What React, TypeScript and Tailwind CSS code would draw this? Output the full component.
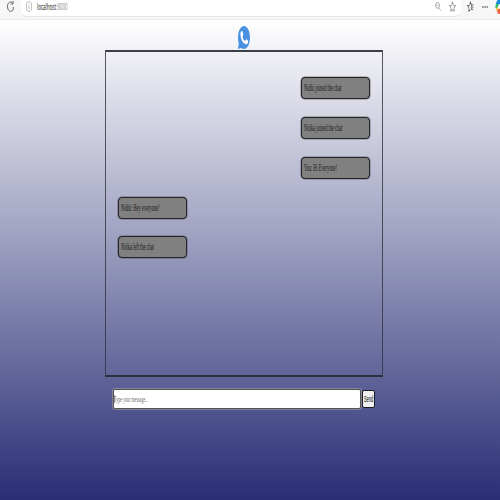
import type { ReactNode } from "react";

const messages = [
  { text: "Nidhi joined the chat", side: "right", scale: "scale-x-[0.445]" },
  { text: "Nitika joined the chat", side: "right", scale: "scale-x-[0.445]" },
  { text: "You: Hi Everyone!", side: "right", scale: "scale-x-[0.435]" },
  { text: "Nidhi: Hey everyone!", side: "left", scale: "scale-x-[0.440]" },
  { text: "Nitika left the chat", side: "left", scale: "scale-x-[0.440]" },
];

function Narrow({ className, children }: { className: string; children: ReactNode }) {
  return <span className={`block w-0 origin-left whitespace-nowrap ${className}`}>{children}</span>;
}

function BrowserBar() {
  return (
    <header className="flex h-[19.5px] shrink-0 items-start overflow-hidden border-b border-[#ededee] bg-[#f7f7f7]">
      <svg className="ml-[7px] mt-[1px] h-[11px] w-[7px]" viewBox="0 0 14 22" preserveAspectRatio="none" fill="none" stroke="#555" strokeWidth="1.8">
        <path d="M11.5 4.5C8-.5 1 2 1 11s7 12 10.5 7.500C12.500 17 13 14.500 13 12M12 0v6H7.500" />
      </svg>
      <div className="ml-[6.500px] flex h-[16.500px] w-[440px] items-start rounded-b-[6px] border-b border-[#e5e5e5] bg-white">
        <svg className="ml-[5.500px] mt-[1px] h-[11px] w-[6px]" viewBox="0 0 12 22" preserveAspectRatio="none" fill="none" stroke="#999" strokeWidth="1.300">
          <ellipse cx="6" cy="11" rx="5.300" ry="10" />
          <path d="M6 9.500v7M6 5.500v2" />
        </svg>
        <Narrow className="ml-[4.500px] mt-[1px] scale-x-[0.505] font-['Open_Sans',sans-serif] text-[9px] leading-[12px] text-[#333] [-webkit-text-stroke:0.1px]">
          localhost<span className="text-[#888] [-webkit-text-stroke:0px]">:8000</span>
        </Narrow>
        <svg className="ml-auto mt-[2px] h-[9px] w-[6px]" viewBox="0 0 12 20" preserveAspectRatio="none" fill="none" stroke="#888" strokeWidth="1.400">
          <ellipse cx="5" cy="7.500" rx="4" ry="6.500" />
          <path d="M3 7.500h4M8 13l3.500 6" />
        </svg>
        <svg className="ml-[8px] mr-[5px] mt-[1px] h-[11px] w-[7px]" viewBox="0 0 24 24" preserveAspectRatio="none" fill="none" stroke="#888" strokeWidth="2.200">
          <path d="M12 2l3 7 7 1-5 5 1 7-6-3.500L6 22l1-7-5-5 7-1z" />
        </svg>
      </div>
      <svg className="ml-[6px] mt-[1px] h-[11px] w-[7px]" viewBox="0 0 24 24" preserveAspectRatio="none" fill="none" stroke="#555" strokeWidth="2.200">
        <path d="M12 19l-6 3 1-7-5-5 7-1 3-7 3 6h6M17 13h5M16 18h5M15 8v11" />
      </svg>
      <svg className="ml-[8px] mt-[5.500px] h-[2px] w-[6px]" viewBox="0 0 6 2" fill="#555">
        <rect x="0" y=".4" width="1.600" height="1.200" />
        <rect x="2.200" y=".4" width="1.600" height="1.200" />
        <rect x="4.400" y=".4" width="1.600" height="1.200" />
      </svg>
      <svg className="ml-auto h-[14px] w-[5px] shrink-0" viewBox="0 0 5 14">
        <path d="M5 0H2.500L1 3v3l4-2z" fill="#1688dc" />
        <path d="M1 3.500L.2 7l1 2.500L3 8l.500-4z" fill="#35b86b" />
        <path d="M1.200 8.500L3.500 8V6L5 4v5H3z" fill="#fff" />
        <path d="M1.500 9.500L5 8.500V14H3z" fill="#f46b42" />
        <path d="M.8 8l.6 2L3 9.500V7z" fill="#ebcb3b" />
      </svg>
    </header>
  );
}

export default function App() {
  return (
    <div className="flex h-[500px] w-[500px] flex-col overflow-hidden bg-white">
      <BrowserBar />
      <main className="flex flex-1 flex-col bg-linear-to-b/srgb from-white to-[#292e75] font-['Liberation_Serif',serif]">
        <svg className="ml-[238px] mt-[6px] h-[23.500px] w-[12px]" viewBox="0 0 24 47" preserveAspectRatio="none">
          <path d="M12 0C18.500 0 24 10 24 23S18.500 46 12 46c-2 0-4-1-6-2l-6 2 1.500-12C.5 31 0 27 0 23 0 10 5.500 0 12 0z" fill="#4b91e2" />
          <path d="M6 11c1.500-2 3-1 3.500 1l1 5c0 2-1 3-1.500 4 1 5 3 8 5 9l2-3c1-1 3 1 4 3 .7 2 0 5-2 6-5 2-12-6-13-17-.2-4 0-6 1-8z" fill="white" />
        </svg>
        <section className="ml-[105px] mt-[1.200px] flex h-[326.500px] w-[278px] shrink-0 flex-col gap-[17.800px] border-x border-y-2 border-x-[#30313a]/80 border-y-[#292b38]/90 px-[12px] pt-[25px]">
          {messages.map((message) => (
            <div
              key={message.text}
              className={`flex h-[22px] w-[69px] shrink-0 items-center rounded-[4px] border border-[#242429] bg-[#808080] pl-[2px] shadow-[0_0_0_0.5px_#24242980] ${message.side === "right" ? "self-end" : "self-start"}`}
            >
              <Narrow className={`text-[10px] leading-[12px] text-[#171717] ${message.scale}`}>{message.text}</Narrow>
            </div>
          ))}
        </section>
        <form className="ml-[113px] mt-[12.500px] flex items-center gap-px" onSubmit={(event) => event.preventDefault()}>
          <div className="flex h-[20px] w-[248px] items-center rounded-[2px] border border-[#55554f] bg-white outline outline-[#a0a0a4]/60">
            <span className="h-[8px] w-px bg-[#999]" />
            <Narrow className="-ml-px scale-x-[0.450] text-[9px] leading-[12px] text-[#666]">Type your message...</Narrow>
          </div>
          <button type="button" className="flex h-[18px] w-[13px] items-center rounded-[2px] border border-[#1b1b24] bg-[#f0f0f0] pl-[1px]">
            <Narrow className="scale-x-[0.435] font-['Liberation_Sans',sans-serif] text-[9px] leading-[12px] text-black">Send</Narrow>
          </button>
        </form>
      </main>
    </div>
  );
}
